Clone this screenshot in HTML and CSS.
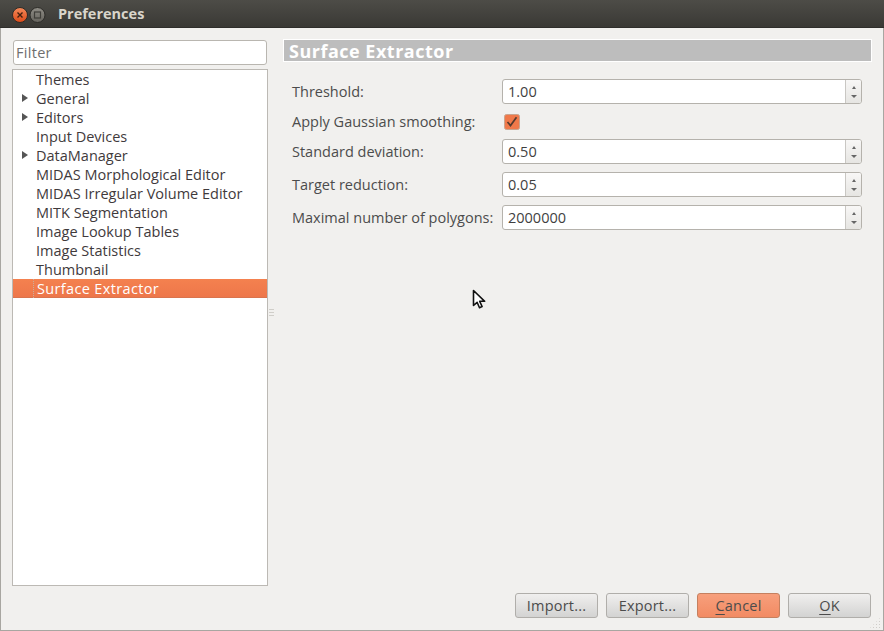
FILE: index.html
```html
<!DOCTYPE html>
<html>
  <head lang="en">
    <meta charset="UTF-8" />
    <title>Preferences</title>
    <link rel="stylesheet" href="styles.css">
  </head>

  <body>
    <div id="window">
      <div class="titlebar">
        <svg class="winbtns" width="48" height="28" viewBox="0 0 48 28">
          <defs>
            <linearGradient id="closeg" x1="0" y1="0" x2="0" y2="1">
              <stop offset="0" stop-color="#f58a5a" />
              <stop offset="1" stop-color="#dc4a18" />
            </linearGradient>
            <linearGradient id="maxg" x1="0" y1="0" x2="0" y2="1">
              <stop offset="0" stop-color="#8f8d86" />
              <stop offset="1" stop-color="#65635d" />
            </linearGradient>
          </defs>
          <circle cx="20" cy="15" r="7.5" fill="url(#closeg)" stroke="#2c2b27" />
          <path d="M17.5 12.5l5 5M22.5 12.5l-5 5" stroke="#43200f" stroke-width="1.4" />
          <circle cx="37.5" cy="15" r="7.5" fill="url(#maxg)" stroke="#2c2b27" />
          <rect x="34.5" y="12" width="6" height="6" fill="none" stroke="#3f3e39" stroke-width="1.2" />
        </svg>
        <span class="wintitle">Preferences</span>
      </div>

      <div class="content">
        <div class="main">
          <div class="left">
            <input class="filter" type="text" placeholder="Filter" />
            <ul class="tree">
              <li>Themes</li>
              <li class="parent">General</li>
              <li class="parent">Editors</li>
              <li>Input Devices</li>
              <li class="parent">DataManager</li>
              <li>MIDAS Morphological Editor</li>
              <li>MIDAS Irregular Volume Editor</li>
              <li>MITK Segmentation</li>
              <li>Image Lookup Tables</li>
              <li>Image Statistics</li>
              <li>Thumbnail</li>
              <li class="current"><span>Surface Extractor</span></li>
            </ul>
          </div>
          <div class="splitter"><i></i><i></i><i></i></div>
          <div class="right">
            <h1 class="heading">Surface Extractor</h1>
            <div class="form">
              <label>Threshold:</label>
              <div class="spin"><span class="val">1.00</span><span class="arrows"><b class="up"></b><b class="down"></b></span></div>
              <label>Apply Gaussian smoothing:</label>
              <div class="checkrow">
                <svg width="16" height="16" viewBox="0 0 16 16">
                  <rect x="0.5" y="0.5" width="15" height="15" rx="2" fill="#f0794a" stroke="#c9a48f" />
                  <path d="M3.5 8l3 3.6L12.5 3.2" fill="none" stroke="#553a2e" stroke-width="1.7" />
                </svg>
              </div>
              <label>Standard deviation:</label>
              <div class="spin"><span class="val">0.50</span><span class="arrows"><b class="up"></b><b class="down"></b></span></div>
              <label>Target reduction:</label>
              <div class="spin"><span class="val">0.05</span><span class="arrows"><b class="up"></b><b class="down"></b></span></div>
              <label>Maximal number of polygons:</label>
              <div class="spin"><span class="val">2000000</span><span class="arrows"><b class="up"></b><b class="down"></b></span></div>
            </div>
          </div>
        </div>

        <div class="buttons">
          <button>Import...</button>
          <button>Export...</button>
          <button class="hot"><u>C</u>ancel</button>
          <button><u>O</u>K</button>
        </div>
      </div>

      <div class="grip"></div>
      <svg class="pointer" width="16" height="22" viewBox="0 0 16 22">
        <path d="M1.5 1.5v15l3.6-3.2 2.4 5.4 2.6-1.2-2.4-5.2h5z" fill="#fff" stroke="#111" stroke-width="1.6" stroke-linejoin="round" />
      </svg>
    </div>
  </body>
</html>
```

FILE: styles.css
```css
* {
  box-sizing: border-box;
}

body,
ul,
h1 {
  margin: 0;
  padding: 0;
}

ul {
  list-style-type: none;
}

body {
  font: 14.5px "Open Sans", "Noto Sans", sans-serif;
  color: #4c4c4c;
  background: #f1f0ee;
  overflow: hidden;
}

#window {
  position: relative;
  display: flex;
  flex-direction: column;
  width: 884px;
  height: 631px;
  background: #f1f0ee;
  border: 1px solid #a8a6a1;
  border-top: 0;
}

.titlebar {
  display: flex;
  align-items: center;
  flex: none;
  height: 28px;
  margin: 0 -1px;
  background: linear-gradient(#4d4c47, #3a3935);
  border-bottom: 1px solid #2f2e2b;
}

.winbtns {
  flex: none;
  margin-right: 10px;
}

.wintitle {
  font-size: 14.5px;
  font-weight: 700;
  color: #d9d5cb;
}

.content {
  display: flex;
  flex-direction: column;
  flex: 1;
  min-height: 0;
  padding: 11px 12px 12px 11px;
}

.main {
  display: flex;
  flex: 1;
  min-height: 0;
}

.left {
  display: flex;
  flex-direction: column;
  flex: none;
  width: 256px;
  height: 547px;
}

.filter {
  flex: none;
  width: 254px;
  height: 25px;
  margin: 1px 1px 4px;
  padding: 0 2px;
  font: inherit;
  letter-spacing: 0.3px;
  color: #4c4c4c;
  background: #fff;
  border: 1px solid #b9b6b0;
  border-radius: 3px;
  outline: 0;
}

.filter::placeholder {
  color: #6f6f6f;
  opacity: 1;
}

.tree {
  flex: 1;
  background: #fff;
  border: 1px solid #bcb9b4;
}

.tree li {
  position: relative;
  height: 19px;
  padding-left: 23px;
  line-height: 19px;
  color: #3f3a3c;
  white-space: nowrap;
}

.tree li.parent::before {
  content: "";
  position: absolute;
  left: 9px;
  top: 5px;
  border-left: 6px solid #555;
  border-top: 4px solid transparent;
  border-bottom: 4px solid transparent;
}

.tree li.current {
  padding-left: 20px;
  color: #fff;
  background: linear-gradient(#f4814f, #ed764a);
  box-shadow: inset 0 -1px 0 #d9744e;
}

.tree li.current span {
  display: block;
  height: 19px;
  padding-left: 3px;
  letter-spacing: 0.35px;
  border-left: 1px dotted #c9ad9e;
}

.splitter {
  display: flex;
  flex-direction: column;
  flex: none;
  justify-content: center;
  gap: 2px;
  width: 15px;
  height: 547px;
  padding-left: 1px;
}

.splitter i {
  display: block;
  width: 5px;
  height: 1px;
  background: #d0cec9;
}

.right {
  flex: 1;
  min-width: 0;
}

.heading {
  height: 23px;
  margin-right: -1px;
  padding-left: 5px;
  font-size: 18px;
  font-weight: 700;
  letter-spacing: 0.5px;
  line-height: 22px;
  color: #fff;
  background: #bdbdbd;
  border: 1px solid #fff;
}

.form {
  display: grid;
  grid-template-columns: 210px 360px;
  grid-template-rows: 25px 19px 25px 25px 25px;
  row-gap: 8px;
  align-items: center;
  margin-top: 17px;
  padding-left: 9px;
}

.form label {
  white-space: nowrap;
}

.spin {
  display: flex;
  height: 25px;
  background: #fff;
  border: 1px solid #b5b2ac;
  border-radius: 3px;
  overflow: hidden;
}

.val {
  flex: 1;
  padding-left: 5px;
  line-height: 23px;
  color: #3f3f3f;
}

.arrows {
  display: flex;
  flex-direction: column;
  align-items: center;
  justify-content: space-between;
  flex: none;
  width: 16px;
  padding: 6px 0 5px;
  background: linear-gradient(#f8f7f6, #e6e5e2);
  border-left: 1px solid #c9c7c3;
}

.up {
  border-left: 2.5px solid transparent;
  border-right: 2.5px solid transparent;
  border-bottom: 3px solid #666;
}

.down {
  border-left: 3px solid transparent;
  border-right: 3px solid transparent;
  border-top: 3px solid #666;
}

.checkrow {
  display: flex;
  height: 19px;
  align-items: center;
  padding-left: 2px;
}

.buttons {
  display: flex;
  flex: none;
  justify-content: flex-end;
  gap: 8px;
  height: 25px;
}

.buttons button {
  width: 83px;
  height: 25px;
  padding: 0;
  font: inherit;
  letter-spacing: 0.2px;
  color: #4c4c4c;
  background: linear-gradient(#f0efee, #d3d3d2);
  border: 1px solid #b0aeaa;
  border-radius: 3px;
}

.buttons button.hot {
  background: linear-gradient(#f79f7c, #f28b63);
  border-color: #c5805f;
}

.buttons u {
  text-underline-offset: 3px;
}

.grip {
  position: absolute;
  right: 2px;
  bottom: 1px;
  width: 12px;
  height: 12px;
  background: radial-gradient(circle, #cfcdc9 1px, transparent 1px) 0 0 / 3px 3px;
  clip-path: polygon(100% 0, 100% 100%, 0 100%);
}

.pointer {
  position: absolute;
  left: 471px;
  top: 289px;
}
```
